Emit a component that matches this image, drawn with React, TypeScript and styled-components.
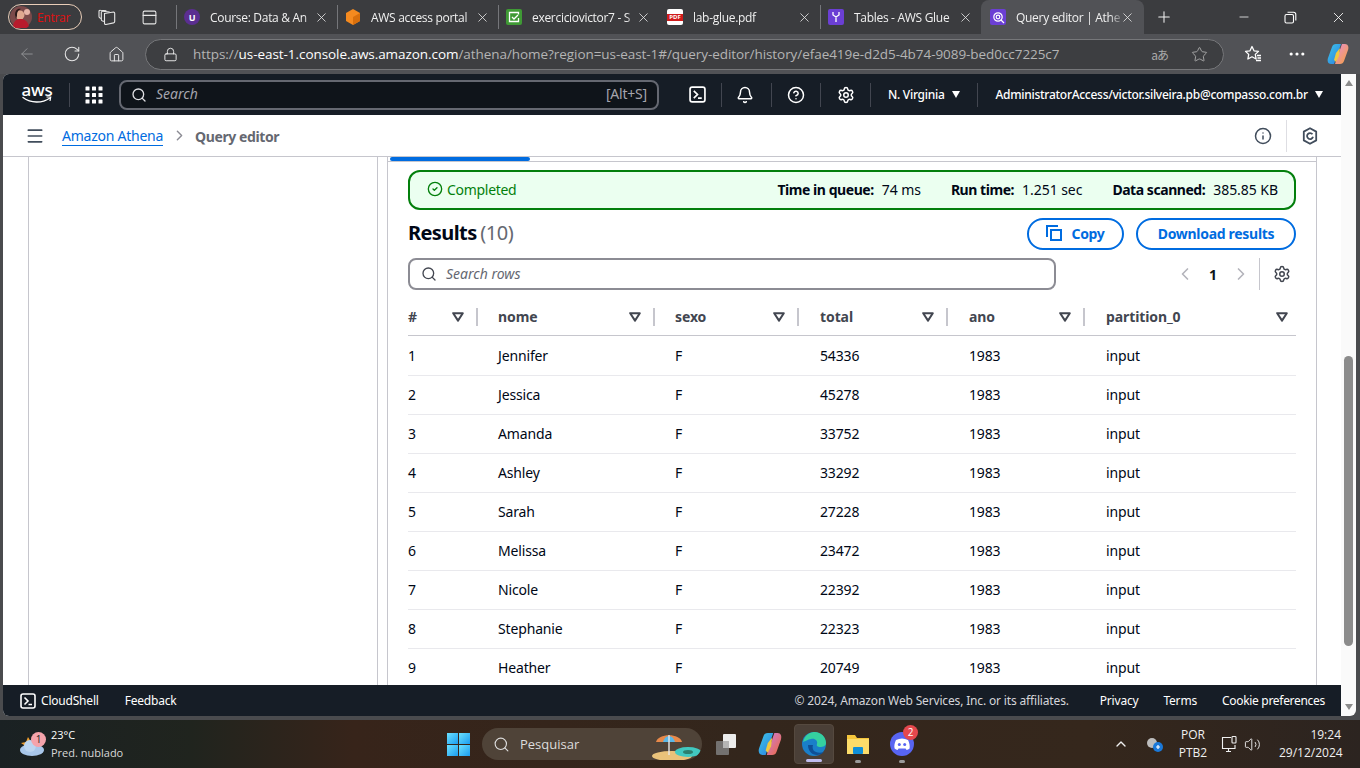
import React from 'react';
import styled, { createGlobalStyle } from 'styled-components';
import { ArrowLeft, RotateCw, Home, Lock, Star, X, Plus, Minus, Search, Bell, CircleHelp, Settings, Menu, Info, ChevronLeft, ChevronRight, ChevronUp, Volume2, PanelTop, CircleCheck, Ellipsis } from 'lucide-react';

const Global = createGlobalStyle`
  html, body { margin: 0; padding: 0; width: 1360px; height: 768px; overflow: hidden; background: #4a4b4e; }
  * { box-sizing: border-box; }
  body { font-family: "Noto Sans", "Open Sans", sans-serif; font-size: 14px; color: #000716; }
`;
const Shell = styled.div`display: flex; flex-direction: column; width: 1360px; height: 768px; overflow: hidden;`;

/* browser tabs */
const TabStrip = styled.div`display: flex; align-items: center; height: 34px; background: #3b3c3f; color: #f0f0f0; font-family: "Open Sans", sans-serif; font-size: 12px; letter-spacing: -.3px;`;
const ProfilePill = styled.div`display: flex; align-items: center; gap: 5px; width: 74px; height: 26px; margin-left: 8px; padding-left: 1px; border: 1px solid #e8cdb8; border-radius: 13px; color: #e01010; font-size: 12px;`;
const StripIcon = styled.div`display: flex; justify-content: center; align-items: center; width: 42px; color: #e6e6e6;`;
const StripIcons = styled.div`display: flex; margin-left: 4px; margin-right: 6px;`;
const Tab = styled.div<{ $active?: boolean; $sep?: boolean }>`
  position: relative; display: flex; align-items: center; flex: none; width: ${p => (p.$active ? 163 : 161)}px; height: ${p => (p.$active ? 34 : 24)}px; padding-left: ${p => (p.$active ? 8 : 7)}px;
  align-self: flex-end; margin-bottom: ${p => (p.$active ? 0 : 5)}px;
  border-left: ${p => (p.$sep ? '1px solid #75767a' : '1px solid transparent')};
  background: ${p => (p.$active ? '#515256' : 'transparent')};
  border-radius: ${p => (p.$active ? '8px 8px 0 0' : '0')};
`;
const Favicon = styled.div<{ $bg: string; $round?: boolean }>`display: flex; justify-content: center; align-items: center; flex: none; width: 16px; height: 16px; background: ${p => p.$bg}; border-radius: ${p => (p.$round ? '50%' : '2px')}; color: #fff; font-size: 9px; font-weight: 700;`;
const PdfBand = styled.span`display: block; width: 16px; background: #d01c1c; color: #fff; font-size: 6px; line-height: 7px; letter-spacing: 0; text-align: center;`;
const TabTitle = styled.div`flex: none; width: 104px; margin-left: 10px; overflow: hidden; white-space: nowrap; -webkit-mask-image: linear-gradient(90deg, #000 90%, rgba(0,0,0,.3));`;
const TabClose = styled.div`display: flex; flex: none; margin-left: 0; color: #e8e8e8;`;
const NewTab = styled.div`display: flex; margin-left: 11px; color: #f2f2f2;`;
const WindowBtns = styled.div`display: flex; align-items: center; margin-left: auto; padding-right: 13px; gap: 33px; color: #fff; svg { flex: none; }`;

/* address bar */
const ToolBar = styled.div`display: flex; align-items: center; height: 40px; padding-left: 18px; background: #515256; color: #e6e6e6;`;
const NavIcons = styled.div`display: flex; align-items: center; gap: 27px; margin-right: 20px;`;
const Address = styled.div`display: flex; align-items: center; flex: none; width: 1079px; height: 31px; padding: 0 15px 0 17px; border: 1px solid #76777a; border-radius: 16px; background: #3d3e41; font-family: "Open Sans", sans-serif; font-size: 13.5px; color: #b4b4b4;`;
const Url = styled.div`margin-left: 15px; white-space: nowrap; flex: 1; letter-spacing: -.06px; b { font-weight: 400; color: #fff; }`;
const AddrRight = styled.div`display: flex; align-items: center; gap: 23px; color: #aaa;`;
const ReadAloud = styled.span`font-family: "Noto Sans CJK JP", "Noto Sans", sans-serif; font-size: 12px; letter-spacing: -1px;`;
const ToolRight = styled.div`display: flex; align-items: center; gap: 20px; margin-left: 20px;`;
const DotsWrap = styled.div`display: flex; margin-left: 5px;`;

/* aws page */
const Body = styled.div`display: flex; height: 642px; padding: 0 4px 0 3px;`;
const Page = styled.div`display: flex; flex-direction: column; flex: 1; min-width: 0; border-radius: 6px 0 0 6px; overflow: hidden; background: #fff;`;
const TopNav = styled.header`display: flex; align-items: center; height: 41px; flex: none; padding: 0 0 0 17px; background: #161d26; color: #fff; font-size: 12px;`;
const AwsMark = styled.div`position: relative; flex: none; width: 34px; height: 28px; color: #fff; font-size: 17px; font-weight: 500; line-height: 17px; letter-spacing: -.3px; text-align: center;`;
const Smile = styled.svg`position: absolute; left: 2px; top: 15px;`;
const NavSep = styled.div<{ $l: number; $r: number }>`flex: none; width: 1px; height: 24px; margin: 0 ${p => p.$r}px 0 ${p => p.$l}px; background: #424650;`;
const SearchBox = styled.div`display: flex; align-items: center; flex: none; width: 540px; height: 30px; padding: 0 10px; margin-left: 16px; border: 2px solid #656871; border-radius: 8px; background: #0f141a; color: #b4b4bb; font-size: 14px;`;
const SearchText = styled.i`flex: 1; margin: -2px 0 0 9px; color: #a4a4ad;`;
const SearchKey = styled.span`margin-top: -2px; color: #a4a4ad; font-size: 14px; letter-spacing: -.2px;`;
const NavIcon = styled.div<{ $l?: number }>`display: flex; flex: none; margin-left: ${p => p.$l ?? 0}px; color: #fff;`;
const Caret = styled.span`display: inline-block; margin-left: 7px; width: 0; height: 0; border: 4.5px solid transparent; border-top: 7px solid #fff; border-bottom: 0; vertical-align: 1px;`;
const NavText = styled.div`flex: none; white-space: nowrap; font-weight: 500; letter-spacing: -.28px;`;

const Crumbs = styled.div`display: flex; align-items: center; height: 42px; flex: none; padding: 0 23px 0 22px; border-bottom: 1px solid #c6c6cd; background: #fff; font-size: 14px;`;
const CrumbLink = styled.a`margin: 2px 0 0 17px; color: #006ce0; border-bottom: 1px solid #006ce0; line-height: 18px; letter-spacing: -.25px;`;
const CrumbSep = styled.div`display: flex; margin: 0 7px 0 8px; color: #8c8c94;`;
const CrumbNow = styled.div`margin-top: 2px; font-weight: 700; color: #656871; letter-spacing: -.4px;`;
const CrumbRight = styled.div`display: flex; align-items: center; margin-left: auto; color: #414d5c;`;
const CrumbDivider = styled.div`width: 1px; height: 32px; margin: 0 15px 0 14px; background: #dedee3;`;

const Content = styled.div`display: grid; grid-template-columns: 26px 349px 1fr; flex: 1; min-height: 0; overflow: hidden; background: #fff;`;
const Rail = styled.div`border-right: 1px solid #c6c6cd;`;
const SidePanel = styled.div`border-right: 1px solid #c6c6cd;`;
const MainCol = styled.div`position: relative; margin-left: 9px; margin-right: 24px; padding-top: 4px; border-left: 1px solid #c6c6cd; border-right: 1px solid #c6c6cd;`;
const TabRule = styled.div`border-top: 1px solid #c6c6cd; margin-left: -1px; margin-right: -1px;`;
const ActiveBar = styled.div`position: absolute; left: 2px; top: 0; width: 140px; height: 4px; background: #006ce0; border-radius: 2px;`;
const Inner = styled.div`padding: 8px 20px 0 20px;`;

const Status = styled.div`display: flex; align-items: center; height: 40px; padding: 0 16px 2px 17px; border: 2px solid #037f0c; border-radius: 12px; background: #ebfff0;`;
const StatusOk = styled.div`display: flex; align-items: center; gap: 4px; margin-right: auto; color: #037f0c; letter-spacing: -.3px;`;
const Metric = styled.div`margin-left: 30px; white-space: nowrap; letter-spacing: -.05px; b { font-weight: 700; margin-right: 8px; letter-spacing: -.45px; }`;
const ResultsHead = styled.div`display: flex; align-items: center; height: 32px; margin-top: 8px;`;
const Title = styled.h2`margin: 0 auto 2px 0; font-size: 20px; line-height: 24px; font-weight: 700; letter-spacing: -.6px; span { font-weight: 400; color: #656871; margin-left: -1px; letter-spacing: -.4px; }`;
const Pill = styled.button<{ $w: number }>`display: flex; justify-content: center; align-items: center; gap: 9px; width: ${p => p.$w}px; height: 32px; margin-left: 12px; padding: 0 0 2px; border: 2px solid #006ce0; border-radius: 16px; background: #fff; color: #006ce0; font: 700 14px "Noto Sans", sans-serif; letter-spacing: -.3px;`;
const Filter = styled.div`display: flex; align-items: center; height: 40px; margin-top: 4px;`;
const FilterBox = styled.div`display: flex; align-items: center; gap: 9px; width: 648px; height: 32px; padding: 0 11px; border: 2px solid #8c8c94; border-radius: 8px; color: #424650; font-size: 14px;`;
const FilterText = styled.i`margin-top: -2px; color: #656871;`;
const Pager = styled.div`display: flex; align-items: center; margin-left: auto; color: #b4b4bb;`;
const PageNum = styled.b`margin: 0 14px; color: #0f141a; font-size: 14px;`;
const PagerSep = styled.div`width: 1px; height: 32px; margin: 0 13px 0 8px; background: #c6c6cd;`;
const GearBox = styled.div`display: flex; margin-right: 5px; color: #424650;`;

const Grid = styled.div`display: grid; grid-template-columns: 90px 177px 145px 149px 137px 190px;`;
const HeadRow = styled(Grid)`height: 38px; margin-top: 4px; border-bottom: 1px solid #c6c6cd;`;
const HeadCell = styled.div`display: flex; align-items: center; color: #424650; font-weight: 700; font-size: 14px; letter-spacing: -.1px;`;
const HeadLabel = styled.span`flex: 1;`;
const SortIcon = styled.svg<{ $end?: boolean }>`flex: none; margin-right: ${p => (p.$end ? 8 : 12)}px;`;
const HeadDivider = styled.div<{ $r: number }>`flex: none; width: 2px; height: 18px; margin-right: ${p => p.$r}px; background: #c6c6cd;`;
const RowList = styled.div`margin-top: 1px;`;
const Row = styled(Grid)`height: 39px; padding-bottom: 1px; align-items: center; border-bottom: 1px solid #e9e9ed; font-size: 14px; letter-spacing: -.15px;`;

const Scrollbar = styled.div`position: relative; display: flex; flex-direction: column; align-items: center; justify-content: space-between; flex: none; width: 15px; height: 642px; background: #fafafa; border-radius: 0 0 6px 0; padding: 6px 0 6px;`;
const ScrollThumb = styled.div`position: absolute; left: 3px; top: 282px; width: 9px; height: 290px; border-radius: 5px; background: #8b8b8b;`;
const ScrollArrow = styled.div<{ $down?: boolean }>`width: 0; height: 0; border: 4px solid transparent; ${p => (p.$down ? 'border-top: 6px solid #8b8b8b; border-bottom: 0;' : 'border-bottom: 6px solid #8b8b8b; border-top: 0;')}`;

const Footer = styled.footer`display: flex; align-items: center; height: 31px; flex: none; padding: 0 16px 0 17px; background: #161d26; color: #fff; font-size: 12px; letter-spacing: -.2px;`;
const FootItem = styled.div<{ $l?: number; $dim?: boolean; $tight?: boolean }>`display: flex; align-items: center; gap: 5px; margin-left: ${p => p.$l ?? 0}px; color: ${p => (p.$dim ? '#d5d5da' : '#fff')}; white-space: nowrap; letter-spacing: ${p => (p.$dim ? '-.16px' : p.$tight ? '-.3px' : '-.2px')};`;
const FootSpacer = styled.div`flex: 1;`;
const TermIcon = styled.svg`flex: none;`;

/* taskbar */
const Taskbar = styled.div`position: relative; display: flex; align-items: center; height: 48px; margin-top: 4px; background: linear-gradient(90deg, #1a2123 0%, #20241e 14%, #37241a 26%, #33261c 55%, #35271c 80%, #2c2420 100%); color: #fff; font-family: "Open Sans", sans-serif;`;
const Weather = styled.div`position: relative; display: flex; align-items: center; width: 446px; padding-left: 19px; font-size: 11px; line-height: 18px;`;
const WeatherText = styled.div`margin-left: 6px; span { color: #d8d8d8; }`;
const Badge = styled.div<{ $bg: string; $x: number; $y: number }>`position: absolute; left: ${p => p.$x}px; top: ${p => p.$y}px; width: 15px; height: 15px; border-radius: 50%; background: ${p => p.$bg}; color: ${p => (p.$bg === '#e5484d' ? '#fff' : '#222')}; font-size: 10px; line-height: 15px; text-align: center;`;
const WinLogo = styled.div`display: grid; grid-template-columns: 11px 11px; grid-gap: 1px; margin-left: 1px;`;
const WinPane = styled.div`width: 11px; height: 11px; background: linear-gradient(135deg, #6be1ff, #1b9cf0);`;
const TaskSearch = styled.div`position: relative; display: flex; align-items: center; gap: 10px; width: 220px; height: 32px; margin-left: 12px; padding-left: 11px; border-radius: 16px; background: #4f4338; color: #ddd; font-size: 13px; overflow: hidden;`;
const BeachArt = styled.svg`position: absolute; right: 0; bottom: 0;`;
const Apps = styled.div`display: flex; align-items: center; margin-left: 4px; gap: 4px;`;
const AppBtn = styled.div<{ $active?: boolean }>`position: relative; display: flex; justify-content: center; align-items: center; width: 40px; height: 40px; border-radius: 4px; background: ${p => (p.$active ? '#4a3f37' : 'transparent')}; border: ${p => (p.$active ? '1px solid #55493f' : '0')};`;
const RunDot = styled.div<{ $active?: boolean }>`position: absolute; bottom: 1px; left: 50%; transform: translateX(-50%); width: ${p => (p.$active ? 16 : 6)}px; height: 3px; border-radius: 2px; background: ${p => (p.$active ? '#c0bdf0' : '#9a9a9a')};`;
const Tray = styled.div`display: flex; align-items: center; margin-left: auto; padding-right: 19px; font-size: 12px; color: #f0f0f0;`;
const Lang = styled.div`width: 40px; margin-left: 9px; line-height: 18px; text-align: center;`;
const TrayIcons = styled.div`display: flex; align-items: center; gap: 6px; margin-left: 8px;`;
const Clock = styled.div`width: 62px; margin-left: 18px; line-height: 18px; text-align: right;`;

const rows: [string, string][] = [
  ['Jennifer', '54336'], ['Jessica', '45278'], ['Amanda', '33752'], ['Ashley', '33292'], ['Sarah', '27228'],
  ['Melissa', '23472'], ['Nicole', '22392'], ['Stephanie', '22323'], ['Heather', '20749'],
];
const cols = ['#', 'nome', 'sexo', 'total', 'ano', 'partition_0'];

const Sort = ({ end }: { end?: boolean }) => (
  <SortIcon $end={end} width="12" height="10" viewBox="0 0 12 10">
    <path d="M1.2 1.2h9.6L6 8.6z" fill="none" stroke="#424650" strokeWidth="2" strokeLinejoin="round" />
  </SortIcon>
);
const Terminal = ({ s = 16, w = 1.6 }: { s?: number; w?: number }) => (
  <TermIcon width={s} height={s} viewBox="0 0 16 16" fill="none" stroke="currentColor" strokeWidth={w}>
    <rect x="1" y="1" width="14" height="14" rx="2" />
    <path d="M4.5 4.5 8 8l-3.5 3.5M8.5 11.5H12" />
  </TermIcon>
);
const BrowserTab = ({ title, bg, glyph, sep, active, round }: { title: string; bg: string; glyph: React.ReactNode; sep?: boolean; active?: boolean; round?: boolean }) => (
  <Tab $sep={sep} $active={active}>
    <Favicon $bg={bg} $round={round}>{glyph}</Favicon>
    <TabTitle>{title}</TabTitle>
    <TabClose><X size={15} strokeWidth={1.3} /></TabClose>
  </Tab>
);

export default function App() {
  return (
    <Shell>
      <Global />
      <TabStrip>
        <ProfilePill>
          <svg width="22" height="22" viewBox="0 0 22 22">
            <circle cx="11" cy="11" r="11" fill="#7b4a4a" />
            <circle cx="10" cy="9" r="4.5" fill="#e0a890" />
            <path d="M3 20c1-6 4-7 8-7s6 2 8 7a11 11 0 0 1-16 0z" fill="#b81b2c" />
            <path d="M5 9c0-5 3-7 6-6-3 1-4 3-4 7l-1 3z" fill="#2a1a1a" />
            <circle cx="17" cy="6" r="3" fill="#e7b4a8" />
          </svg>
          Entrar
        </ProfilePill>
        <StripIcons>
          <StripIcon>
            <svg width="18" height="18" viewBox="0 0 18 18" fill="none" stroke="#e6e6e6" strokeWidth="1.1">
              <path d="M6.500 5.500l9-1.500c.8 0 1.200.5 1.200 1.200v8.300c0 .8-.4 1.200-1.200 1.400l-7.500 1.600c-.9.100-1.500-.4-1.500-1.300z" />
              <path d="M6.500 13.500l-2-.5c-.8-.2-1.200-.7-1.200-1.500V4.500c0-.8.6-1.300 1.400-1.200l7 .7" />
              <path d="M3.300 10.500L2 10c-.6-.2-1-.7-1-1.400V3.500C1 2.700 1.600 2.100 2.400 2.200l6 .5" />
            </svg>
          </StripIcon>
          <StripIcon><PanelTop size={17} strokeWidth={1.5} /></StripIcon>
        </StripIcons>
        <BrowserTab sep title="Course: Data & An" bg="#5b2e91" round glyph="U" />
        <BrowserTab sep title="AWS access portal" bg="transparent" glyph={
          <svg width="16" height="16" viewBox="0 0 16 16"><path d="M8 0l7 4v8l-7 4-7-4V4z" fill="#f58a1f" /><path d="M8 8l7-4v8l-7 4z" fill="#d96f0c" /></svg>
        } />
        <BrowserTab sep title="exerciciovictor7 - S" bg="#3f9a35" glyph={
          <svg width="12" height="12" viewBox="0 0 12 12" fill="none" stroke="#fff" strokeWidth="1.3"><path d="M10.5 3.5V1.5h-9v9h9V7" /><path d="M4 6l2 2 4-4" /></svg>
        } />
        <BrowserTab title="lab-glue.pdf" bg="#fff" glyph={<PdfBand>PDF</PdfBand>} />
        <BrowserTab sep title="Tables - AWS Glue" bg="#6b3fd4" glyph={
          <svg width="12" height="12" viewBox="0 0 12 12" fill="none" stroke="#fff" strokeWidth="1.3"><path d="M3 1v3l3 2 3-2V1M6 6v5" /></svg>
        } />
        <BrowserTab active title="Query editor | Athe" bg="#6b3fd4" glyph={
          <svg width="13" height="13" viewBox="0 0 13 13" fill="none" stroke="#fff" strokeWidth="1.2"><circle cx="6" cy="6" r="4.2" /><circle cx="6" cy="6" r="1.8" /><path d="M9 9l3 3" /></svg>
        } />
        <NewTab><Plus size={18} strokeWidth={1.4} /></NewTab>
        <WindowBtns>
          <Minus size={14} strokeWidth={1.3} />
          <svg width="13" height="13" viewBox="0 0 13 13" fill="none" stroke="#fff" strokeWidth="1.1">
            <rect x="1" y="3.500" width="8.500" height="8.500" rx="1.500" />
            <path d="M3.500 1.200h6c1.300 0 2.300 1 2.300 2.300v6" />
          </svg>
          <X size={17} strokeWidth={1.2} />
        </WindowBtns>
      </TabStrip>

      <ToolBar>
        <NavIcons>
          <ArrowLeft size={18} strokeWidth={1.3} color="#8f9093" />
          <RotateCw size={18} strokeWidth={1.4} />
          <Home size={17} strokeWidth={1.4} />
        </NavIcons>
        <Address>
          <Lock size={15} strokeWidth={1.5} color="#eee" />
          <Url>https://<b>us-east-1.console.aws.amazon.com</b>/athena/home?region=us-east-1#/query-editor/history/efae419e-d2d5-4b74-9089-bed0cc7225c7</Url>
          <AddrRight>
            <ReadAloud>aあ</ReadAloud>
            <Star size={17} strokeWidth={1.3} />
          </AddrRight>
        </Address>
        <ToolRight>
          <svg width="18" height="18" viewBox="0 0 18 18" fill="none" stroke="#fff" strokeWidth="1.3" style={{ flex: 'none' }}>
            <path d="M8 1.500l2 4.300 4.500.6-3.200 3 .8 4.600L8 11.800 3.900 14l.8-4.600-3.200-3 4.500-.6z" strokeLinejoin="round" />
            <path d="M13 10.500h4M13.500 13h3.500M12 15.500h5" />
          </svg>
          <DotsWrap><Ellipsis size={20} strokeWidth={1.8} color="#fff" /></DotsWrap>
          <svg width="22" height="22" viewBox="0 0 22 22" style={{ flex: 'none' }}>
            <defs>
              <linearGradient id="cpA" x1="0" y1="0" x2="1" y2="1"><stop offset="0" stopColor="#3ec7e8" /><stop offset="1" stopColor="#2a7de1" /></linearGradient>
              <linearGradient id="cpB" x1="0" y1="0" x2="1" y2="1"><stop offset="0" stopColor="#e58cd8" /><stop offset="1" stopColor="#f6a13a" /></linearGradient>
            </defs>
            <path d="M9 1h5L7 21H4C1 21 0 18 1 15l4-11c.6-2 2-3 4-3z" fill="url(#cpA)" />
            <path d="M8 21h5c2 0 3.400-1 4-3l4-11c1-3 0-6-3-6h-3z" fill="url(#cpB)" />
            <path d="M7 17l2-7 4-5-1 8-3 6z" fill="#f0c840" />
          </svg>
        </ToolRight>
      </ToolBar>

      <Body>
        <Page>
          <TopNav>
            <AwsMark>aws
              <Smile width="30" height="9" viewBox="0 0 30 9" fill="none">
                <path d="M1 1.500c8 6 19 6 27 .5" stroke="#fff" strokeWidth="1.4" strokeLinecap="round" />
                <path d="M24.500 1h4.200L28 5" stroke="#fff" strokeWidth="1.2" />
              </Smile>
            </AwsMark>
            <NavSep $l={15} $r={15} />
            <svg width="18" height="18" viewBox="0 0 18 18" fill="#fff" style={{ flex: 'none' }}>
              {[0, 6.5, 13].map(x => [0, 6.5, 13].map(y => <rect key={`${x}-${y}`} x={x + 0.5} y={y + 0.5} width="4" height="4" rx=".6" />))}
            </svg>
            <SearchBox>
              <Search size={16} strokeWidth={2} color="#e0e0e4" />
              <SearchText>Search</SearchText>
              <SearchKey>[Alt+S]</SearchKey>
            </SearchBox>
            <NavIcon $l={30}><Terminal s={17} w={1.6} /></NavIcon>
            <NavSep $l={15} $r={14} />
            <NavIcon><Bell size={18} strokeWidth={2} /></NavIcon>
            <NavSep $l={17} $r={15} />
            <NavIcon><CircleHelp size={18} strokeWidth={2} /></NavIcon>
            <NavSep $l={15} $r={16} />
            <NavIcon><Settings size={18} strokeWidth={2} /></NavIcon>
            <NavSep $l={15} $r={17} />
            <NavText>N. Virginia<Caret /></NavText>
            <NavSep $l={17} $r={18} />
            <NavText>AdministratorAccess/victor.silveira.pb@compasso.com.br<Caret /></NavText>
          </TopNav>

          <Crumbs>
            <Menu size={20} strokeWidth={2} color="#414d5c" />
            <CrumbLink>Amazon Athena</CrumbLink>
            <CrumbSep><ChevronRight size={17} strokeWidth={2} /></CrumbSep>
            <CrumbNow>Query editor</CrumbNow>
            <CrumbRight>
              <Info size={18} strokeWidth={2} />
              <CrumbDivider />
              <svg width="16" height="18" viewBox="0 0 16 18" fill="none" stroke="#414d5c" strokeWidth="1.8">
                <path d="M8 1.200l6.200 3.400v8.800L8 16.800l-6.200-3.400V4.600z" strokeLinejoin="round" />
                <path d="M10.500 7.300a3 3 0 1 0 .5 2.500" />
              </svg>
            </CrumbRight>
          </Crumbs>

          <Content>
            <Rail />
            <SidePanel />
            <MainCol>
              <ActiveBar />
              <TabRule />
              <Inner>
                <Status>
                  <StatusOk><CircleCheck size={16} strokeWidth={2} />Completed</StatusOk>
                  <Metric><b>Time in queue:</b>74 ms</Metric>
                  <Metric><b>Run time:</b>1.251 sec</Metric>
                  <Metric><b>Data scanned:</b>385.85 KB</Metric>
                </Status>
                <ResultsHead>
                  <Title>Results <span>(10)</span></Title>
                  <Pill $w={97}>
                    <svg width="16" height="16" viewBox="0 0 16 16" fill="none" stroke="currentColor" strokeWidth="2">
                      <path d="M1 12V1h11" />
                      <rect x="5" y="5" width="10" height="10" />
                    </svg>
                    Copy
                  </Pill>
                  <Pill $w={160}>Download results</Pill>
                </ResultsHead>
                <Filter>
                  <FilterBox><Search size={16} strokeWidth={2} /><FilterText>Search rows</FilterText></FilterBox>
                  <Pager>
                    <ChevronLeft size={20} strokeWidth={2} />
                    <PageNum>1</PageNum>
                    <ChevronRight size={20} strokeWidth={2} />
                    <PagerSep />
                    <GearBox><Settings size={18} strokeWidth={2} /></GearBox>
                  </Pager>
                </Filter>
                <HeadRow>
                  {cols.map((c, i) => (
                    <HeadCell key={c}>
                      <HeadLabel>{c}</HeadLabel>
                      <Sort end={i === cols.length - 1} />
                      {i < cols.length - 1 && <HeadDivider $r={i < 2 ? 20 : 21} />}
                    </HeadCell>
                  ))}
                </HeadRow>
                <RowList>
                  {rows.map(([nome, total], i) => (
                    <Row key={nome}>
                      <div>{i + 1}</div><div>{nome}</div><div>F</div><div>{total}</div><div>1983</div><div>input</div>
                    </Row>
                  ))}
                </RowList>
              </Inner>
            </MainCol>
          </Content>

          <Footer>
            <FootItem><Terminal s={16} w={1.6} />CloudShell</FootItem>
            <FootItem $l={26}>Feedback</FootItem>
            <FootSpacer />
            <FootItem $dim>© 2024, Amazon Web Services, Inc. or its affiliates.</FootItem>
            <FootItem $l={31}>Privacy</FootItem>
            <FootItem $l={25}>Terms</FootItem>
            <FootItem $l={25} $tight>Cookie preferences</FootItem>
          </Footer>
        </Page>
        <Scrollbar>
          <ScrollArrow />
          <ScrollThumb />
          <ScrollArrow $down />
        </Scrollbar>
      </Body>

      <Taskbar>
        <Weather>
          <svg width="26" height="26" viewBox="0 0 26 26">
            <path d="M2 12l5-1 2-5 3 5-4 5z" fill="#f2a02e" />
            <ellipse cx="13" cy="19" rx="12" ry="6" fill="#a9c7ea" />
            <circle cx="11" cy="15" r="6" fill="#bcd5f0" />
          </svg>
          <Badge $bg="#f4a3ab" $x={31} $y={6}>1</Badge>
          <WeatherText>23°C<br /><span>Pred. nublado</span></WeatherText>
        </Weather>
        <WinLogo><WinPane /><WinPane /><WinPane /><WinPane /></WinLogo>
        <TaskSearch>
          <Search size={17} strokeWidth={1.6} />
          Pesquisar
          <BeachArt width="52" height="32" viewBox="0 0 52 32">
            <ellipse cx="22" cy="28" rx="20" ry="5" fill="#e9c27a" />
            <ellipse cx="38" cy="24" rx="13" ry="5" fill="#41c9c0" />
            <ellipse cx="38" cy="24" rx="5" ry="2" fill="#2b7f6e" />
            <path d="M6 14c2-9 24-9 26 0z" fill="#e8894a" />
            <path d="M13 14c2-8 10-8 12 0z" fill="#5bb8e8" />
            <path d="M19 7v20" stroke="#e8e8e8" strokeWidth="1.4" />
          </BeachArt>
        </TaskSearch>
        <Apps>
          <AppBtn>
            <svg width="24" height="24" viewBox="0 0 24 24">
              <rect x="9" y="2" width="13" height="14" rx="1" fill="#ececec" />
              <rect x="2" y="9" width="13" height="14" rx="1" fill="#7a7a7a" opacity=".9" />
              <rect x="9" y="9" width="6" height="7" fill="#b5b5b5" />
            </svg>
          </AppBtn>
          <AppBtn>
            <svg width="24" height="24" viewBox="0 0 22 22">
              <defs>
                <linearGradient id="cp2A" x1="0" y1="0" x2="1" y2="1"><stop offset="0" stopColor="#3ec7e8" /><stop offset="1" stopColor="#2a7de1" /></linearGradient>
                <linearGradient id="cp2B" x1="0" y1="0" x2="1" y2="1"><stop offset="0" stopColor="#c87be0" /><stop offset="1" stopColor="#f06a3a" /></linearGradient>
              </defs>
              <path d="M9 1h5L7 21H4C1 21 0 18 1 15l4-11c.6-2 2-3 4-3z" fill="url(#cp2A)" />
              <path d="M8 21h5c2 0 3.400-1 4-3l4-11c1-3 0-6-3-6h-3z" fill="url(#cp2B)" />
              <path d="M7 17l2-7 4-5-1 8-3 6z" fill="#f0c840" />
            </svg>
          </AppBtn>
          <AppBtn $active>
            <svg width="26" height="26" viewBox="0 0 26 26">
              <circle cx="13" cy="13" r="12" fill="#1a7fc9" />
              <path d="M2 11C4 3 10 1 14 1c6 0 11 5 11 11 0 3-3 4-6 4-2 0-4-1-3-3 1-3-2-6-6-5-3 .7-6 2-8 3z" fill="#35d0a0" />
              <path d="M7 14c0 6 4 10 9 10 3 0 5-1 7-3-3 1-6 1-8 0-3-1-4-4-3-7z" fill="#0f4f96" />
            </svg>
            <RunDot $active />
          </AppBtn>
          <AppBtn>
            <svg width="24" height="24" viewBox="0 0 24 24">
              <path d="M1 3h8l2 3h12v16H1z" fill="#f5c63c" />
              <rect x="1" y="7" width="22" height="15" fill="#fcdc6a" />
              <rect x="7" y="15" width="10" height="7" fill="#0f8fd8" rx="1" />
            </svg>
            <RunDot />
          </AppBtn>
          <AppBtn>
            <svg width="24" height="26" viewBox="0 0 24 26">
              <circle cx="12" cy="13" r="12" fill="#5865f2" />
              <path d="M6 9c4-2 8-2 12 0 1.500 3 2 6 1.600 8.500-1 .8-2 1.200-3 1.500l-1-1.500h-7l-1 1.500c-1-.3-2-.7-3-1.500C4 15 4.500 12 6 9z" fill="#fff" />
              <circle cx="9.300" cy="13.500" r="1.500" fill="#5865f2" />
              <circle cx="14.700" cy="13.500" r="1.500" fill="#5865f2" />
            </svg>
            <Badge $bg="#e5484d" $x={21} $y={1}>2</Badge>
            <RunDot />
          </AppBtn>
        </Apps>
        <Tray>
          <ChevronUp size={16} strokeWidth={2} />
          <svg width="18" height="18" viewBox="0 0 18 18" style={{ marginLeft: 17 }}>
            <circle cx="6" cy="8" r="5" fill="#bdbdbd" />
            <circle cx="12" cy="12" r="5" fill="#1a78d8" />
            <path d="M10 12h4M12 10v4" stroke="#fff" strokeWidth="1.200" />
          </svg>
          <Lang>POR<br />PTB2</Lang>
          <TrayIcons>
            <svg width="17" height="18" viewBox="0 0 17 18" fill="none" stroke="#f0f0f0" strokeWidth="1.100">
              <path d="M10 2.500H1.500v11H14V10" />
              <rect x="11" y="1.500" width="4" height="6.500" rx=".8" />
              <path d="M5 16.500h5M7.500 13.500v3" />
            </svg>
            <Volume2 size={17} strokeWidth={1.3} />
          </TrayIcons>
          <Clock>19:24<br />29/12/2024</Clock>
        </Tray>
      </Taskbar>
    </Shell>
  );
}
